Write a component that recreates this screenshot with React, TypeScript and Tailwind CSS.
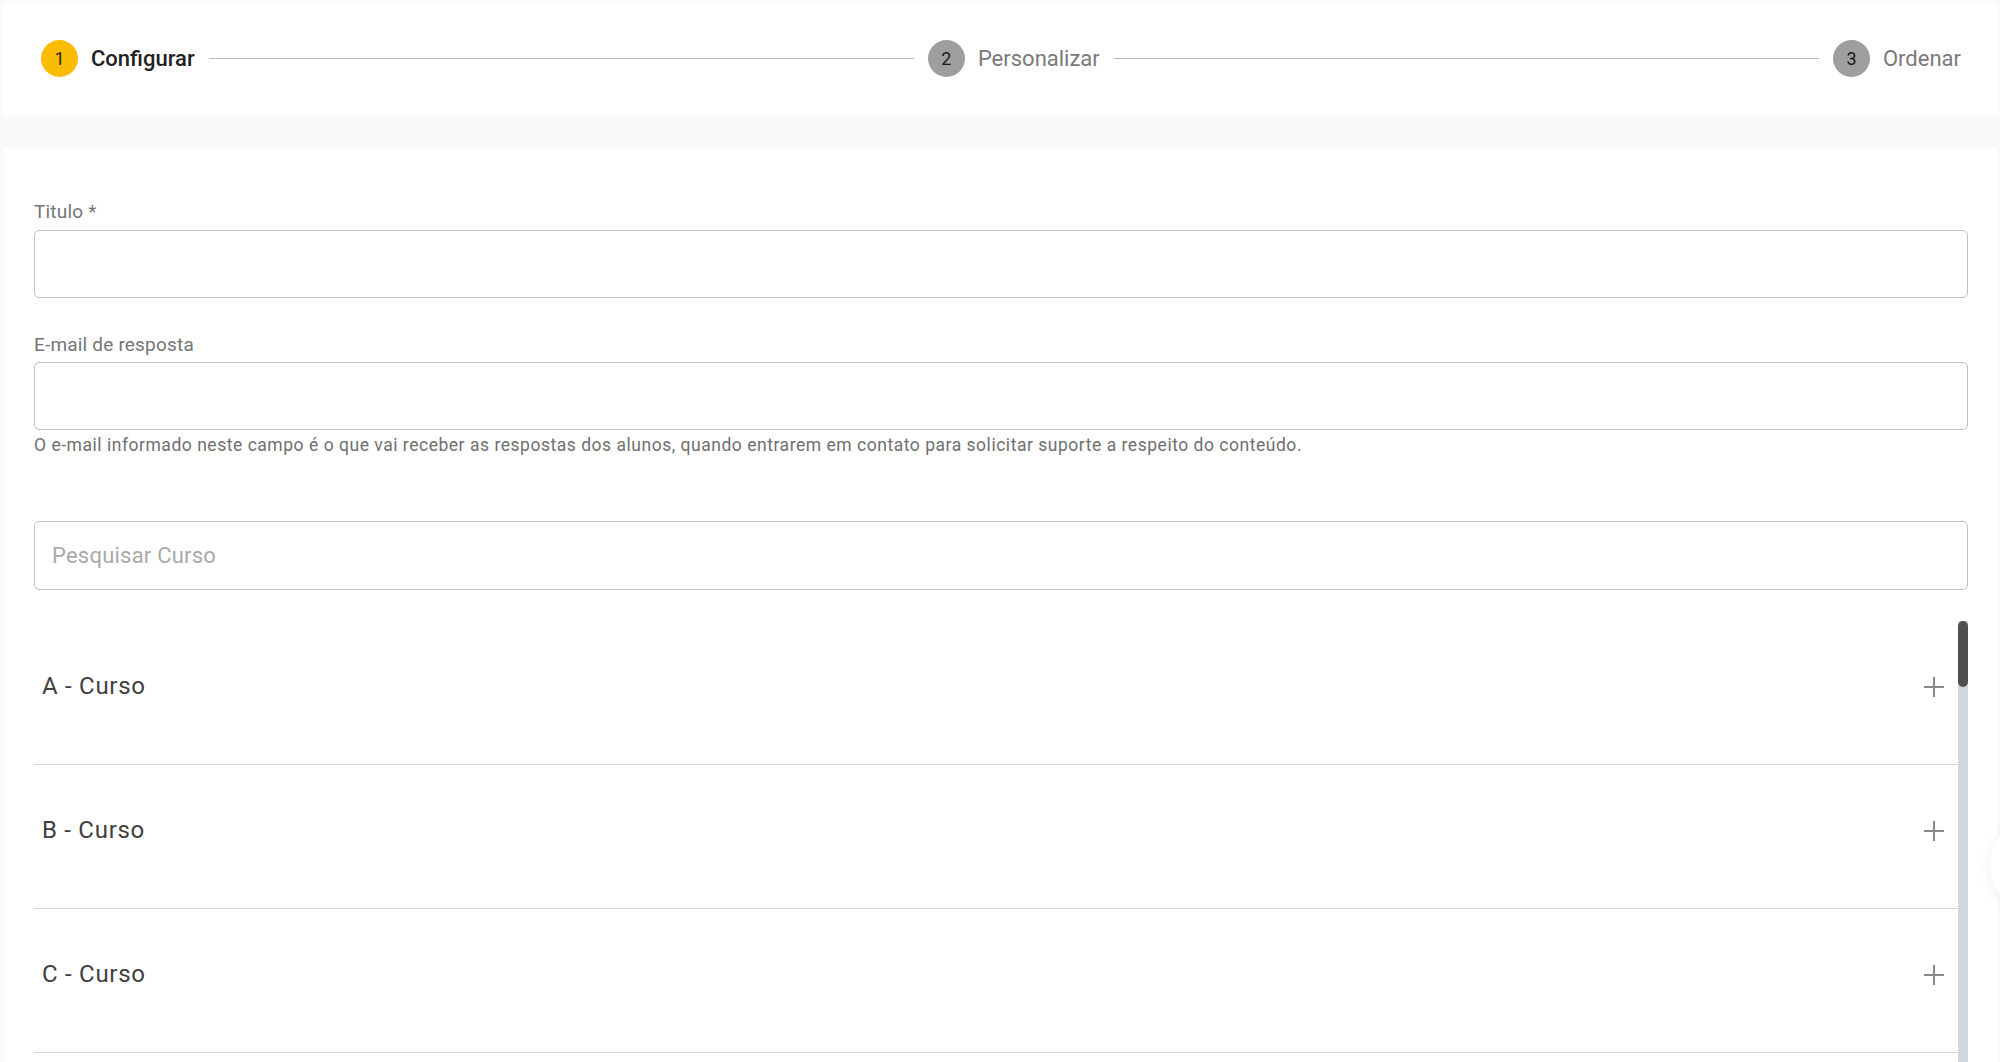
import React from 'react';

interface Step {
  n: number;
  label: string;
  active?: boolean;
}

const steps: Step[] = [
  { n: 1, label: 'Configurar', active: true },
  { n: 2, label: 'Personalizar' },
  { n: 3, label: 'Ordenar' },
];

const cursos = ['A - Curso', 'B - Curso', 'C - Curso'];

function PlusIcon() {
  return (
    <svg width="22" height="22" viewBox="0 0 22 22" className="shrink-0">
      <path d="M11 1v20M1 11h20" stroke="#8a8a8a" strokeWidth="2" fill="none" />
    </svg>
  );
}

function Stepper() {
  return (
    <div className="flex items-center h-[112px] bg-white pl-[38px] pr-[37px] pb-[1px]">
      {steps.map((step, i) => (
        <React.Fragment key={step.n}>
          <div className="flex items-center shrink-0">
            <div
              className={`w-[37px] h-[37px] rounded-full flex items-center justify-center text-[18px] ${
                step.active ? 'bg-[#fbbc05] text-[#1d2b1a]' : 'bg-[#9e9e9e] text-[#1a1a1a]'
              }`}
            >
              {step.n}
            </div>
            <span
              className={`ml-[13px] text-[22px] leading-none ${
                step.active ? 'font-medium text-[#212121]' : 'text-[#7a7a7a]'
              }`}
            >
              {step.label}
            </span>
          </div>
          {i < steps.length - 1 && <div className="flex-1 h-[1.5px] bg-[#b8b8b8] mx-[14px]" />}
        </React.Fragment>
      ))}
    </div>
  );
}

export default function App() {
  return (
    <div
      className="min-h-screen bg-[#fafafa] pt-[3px] pl-[3px] pr-[2px] overflow-hidden relative"
      style={{ fontFamily: 'Roboto, "Noto Sans", sans-serif' }}
    >
      {/* Stepper header */}
      <Stepper />

      {/* Form card */}
      <div className="mt-[32px] bg-white rounded-[6px] shadow-[0_0_2px_rgba(0,0,0,0.06)] pt-[53px] pl-[31px] pr-[30px]">
        <label className="block text-[19px] leading-[23px] text-[#757575] tracking-[0.01em] mb-[7px]">Titulo *</label>
        <input className="block w-full h-[68px] rounded-[5px] border-[1.5px] border-[#b7c4ca] bg-white outline-none px-4 text-[20px]" />

        <label className="block text-[19px] leading-[23px] text-[#757575] tracking-[0.01em] mt-[35px] mb-[6px]">
          E-mail de resposta
        </label>
        <input className="block w-full h-[68px] rounded-[5px] border-[1.5px] border-[#b7c4ca] bg-white outline-none px-4 text-[20px]" />
        <p className="text-[17.5px] leading-[24px] tracking-[0.03em] text-[#6f6f6f] mt-[3px]">
          O e-mail informado neste campo é o que vai receber as respostas dos alunos, quando entrarem em contato para solicitar suporte a respeito do conteúdo.
        </p>

        <input
          placeholder="Pesquisar Curso"
          className="block w-full h-[69px] mt-[64px] rounded-[5px] border-[1.5px] border-[#b7c4ca] bg-white outline-none pl-[17px] text-[22px] tracking-[0.01em] placeholder:text-[#a9a9a9]"
        />

        {/* Course list */}
        <div className="flex mt-[31px] h-[460px] overflow-hidden">
          <div className="flex-1">
            {cursos.map((c) => (
              <div
                key={c}
                className="h-[144px] flex items-start justify-between pl-[8px] pr-[13px] pt-[52px] border-b-[1.5px] border-[#d6d6d6]"
              >
                <span className="text-[24px] leading-[26px] tracking-[0.03em] text-[#404040]">{c}</span>
                <div className="mt-[3px]">
                  <PlusIcon />
                </div>
              </div>
            ))}
          </div>
          <div className="w-[10px] bg-[#cfd8dc]">
            <div className="h-[66px] bg-[#4f4f4f] rounded-full" />
          </div>
        </div>
      </div>

      {/* floating button mostly off-screen */}
      <div className="absolute right-[-90px] top-[815px] w-[100px] h-[100px] rounded-full bg-white shadow-[0_2px_14px_rgba(0,0,0,0.07)]" />
    </div>
  );
}
